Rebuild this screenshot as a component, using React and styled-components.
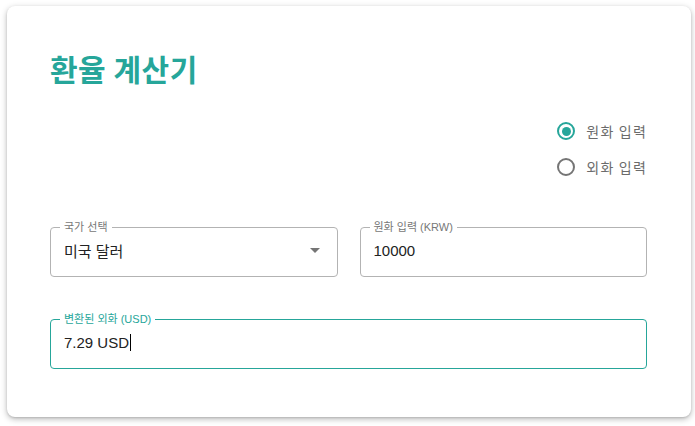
import React, { useState } from "react";
import styled, { createGlobalStyle } from "styled-components";

const TEAL = "#26a69a";

const GlobalStyle = createGlobalStyle`
  html, body { margin: 0; padding: 0; background: #fff; }
  body { font-family: "Liberation Sans", "Noto Sans CJK KR", sans-serif; }
`;

/* ---------------- LAYOUT ---------------- */
const Page = styled.div`
  padding: 6px 4px 9px 7px;
`;

const Card = styled.div`
  background: #fff;
  border-radius: 8px;
  box-shadow: 0 2px 6px rgba(0, 0, 0, 0.28), 0 1px 2px rgba(0, 0, 0, 0.12);
  padding: 44px 44px 48px 43px;
  height: 411px;
  box-sizing: border-box;
`;

const Title = styled.h1`
  margin: 0;
  font-size: 30px;
  line-height: 36px;
  font-weight: 700;
  letter-spacing: 0.5px;
  color: ${TEAL};
  font-family: "Noto Sans CJK KR", sans-serif;
`;

const RadioGroup = styled.div`
  display: flex;
  flex-direction: column;
  align-items: flex-end;
  margin-top: 27px;
`;

const RadioRow = styled.label`
  display: flex;
  align-items: center;
  gap: 11px;
  height: 36px;
  cursor: pointer;
  font-size: 14px;
  letter-spacing: 1.2px;
  color: #6b6b6b;
  font-family: "Noto Sans CJK KR", sans-serif;
`;

const Circle = styled.span`
  width: 18px;
  height: 18px;
  border-radius: 50%;
  box-sizing: border-box;
  border: 2px solid ${({ $on }) => ($on ? TEAL : "#757575")};
  display: flex;
  align-items: center;
  justify-content: center;
  flex-shrink: 0;
  &::after {
    content: "";
    width: 9px;
    height: 9px;
    border-radius: 50%;
    background: ${({ $on }) => ($on ? TEAL : "transparent")};
  }
`;

const FieldRow = styled.div`
  display: grid;
  grid-template-columns: 1fr 1fr;
  gap: 22px;
  margin-top: 36px;
`;

const Field = styled.fieldset`
  margin: ${({ $top }) => $top || 0} 0 0;
  padding: 0 13px;
  border: 1px solid ${({ $focus }) => ($focus ? TEAL : "#b3b3b3")};
  border-radius: 4px;
  min-width: 0;
`;

const Legend = styled.legend`
  font-size: 11px;
  line-height: 13px;
  padding: 0 4px;
  margin-left: -4px;
  color: ${({ $focus }) => ($focus ? TEAL : "#777")};
`;

const Value = styled.div`
  display: flex;
  align-items: center;
  justify-content: space-between;
  height: 20px;
  padding: 6px 0 16px;
  font-size: 15px;
  color: #222;
`;

const Caret = styled.span`
  display: inline-block;
  width: 1px;
  height: 17px;
  background: #000;
  margin-left: 1px;
`;

const ValueText = styled.span`
  display: flex;
  align-items: center;
`;

const Arrow = () => (
  <svg width="24" height="24" viewBox="0 0 24 24" style={{ marginRight: -3 }}>
    <path d="M7 10l5 5 5-5z" fill="#757575" />
  </svg>
);

export default function App() {
  const [mode, setMode] = useState("krw");

  return (
    <Page>
      <GlobalStyle />
      <Card>
        <Title>환율 계산기</Title>

        <RadioGroup>
          <RadioRow onClick={() => setMode("krw")}>
            <Circle $on={mode === "krw"} />
            원화 입력
          </RadioRow>
          <RadioRow onClick={() => setMode("foreign")}>
            <Circle $on={mode === "foreign"} />
            외화 입력
          </RadioRow>
        </RadioGroup>

        <FieldRow>
          <Field>
            <Legend>국가 선택</Legend>
            <Value>
              <span>미국 달러</span>
              <Arrow />
            </Value>
          </Field>
          <Field>
            <Legend>원화 입력 (KRW)</Legend>
            <Value>10000</Value>
          </Field>
        </FieldRow>

        <Field $focus $top="36px">
          <Legend $focus>변환된 외화 (USD)</Legend>
          <Value>
            <ValueText>
              7.29 USD
              <Caret />
            </ValueText>
          </Value>
        </Field>
      </Card>
    </Page>
  );
}
